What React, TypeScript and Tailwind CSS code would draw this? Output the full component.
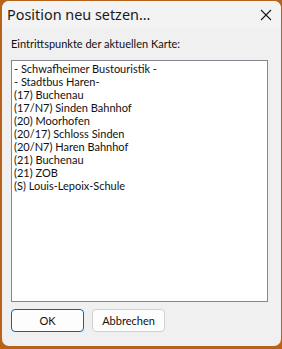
import React from "react";

const items = [
  "- Schwafheimer Bustouristik -",
  "- Stadtbus Haren-",
  "(17) Buchenau",
  "(17/N7) Sinden Bahnhof",
  "(20) Moorhofen",
  "(20/17) Schloss Sinden",
  "(20/N7) Haren Bahnhof",
  "(21) Buchenau",
  "(21) ZOB",
  "(S) Louis-Lepoix-Schule",
];

const ui = { fontFamily: '"Lato", "Noto Sans", sans-serif', fontSize: 11 };

export default function App() {
  return (
    <div className="w-[282px] h-[349px] bg-[#b8621a] pt-[1px] pl-[2px] overflow-hidden">
      <div className="w-[279px] h-[345px] bg-[#f0f0f0] rounded-[7px] flex flex-col overflow-hidden">
        <div className="h-[28px] bg-[#f3f3f3] flex items-center justify-between pl-[5px] pr-[8px] shrink-0">
          <span
            className="text-[#1a1a1a] leading-none"
            style={{ fontFamily: '"Noto Sans", sans-serif', fontSize: 14.4 }}
          >
            Position neu setzen...
          </span>
          <svg width="12" height="12" viewBox="0 0 12 12" className="mr-[1px]">
            <path d="M1 1 L11 11 M11 1 L1 11" stroke="#1a1a1a" strokeWidth="1.1" />
          </svg>
        </div>
        <div className="pl-[9px] pr-[13px] flex flex-col">
          <div className="text-[#111] leading-none mt-[9px] h-[22px]" style={ui}>
            Eintrittspunkte der aktuellen Karte:
          </div>
          <div className="h-[242px] bg-white border border-[#828790] pl-[2px] pt-[1px]">
            {items.map((t) => (
              <div key={t} className="leading-[13px] text-[#111]" style={ui}>
                {t}
              </div>
            ))}
          </div>
          <div className="flex gap-[8px] mt-[7px]">
            <button
              className="w-[73px] h-[23px] rounded-[4px] border border-[#0067c0] bg-[#fdfdfd] text-[#111] leading-none"
              style={ui}
            >
              OK
            </button>
            <button
              className="w-[73px] h-[23px] rounded-[4px] border border-[#d0d0d0] bg-[#fdfdfd] text-[#111] leading-none"
              style={ui}
            >
              Abbrechen
            </button>
          </div>
        </div>
      </div>
    </div>
  );
}
